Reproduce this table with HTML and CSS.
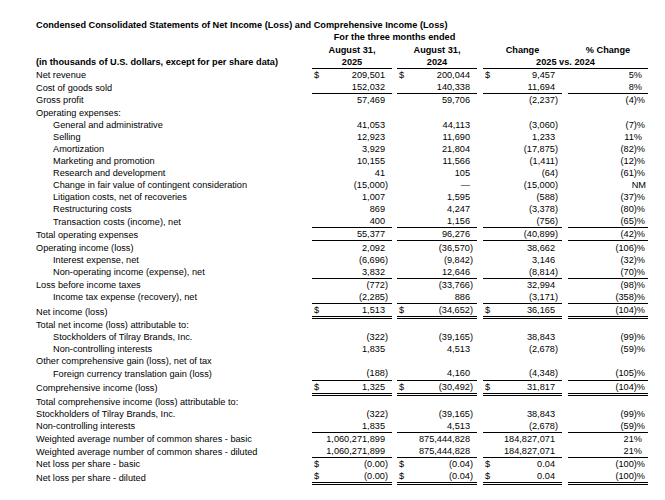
FILE: index.html
```html
<!DOCTYPE html>
<html>
<head>
<meta charset="utf-8">
<link rel="stylesheet" href="styles.css">
</head>
<body>
<div class="sheet">
<div class="title">Condensed Consolidated Statements of Net Income (Loss) and Comprehensive Income (Loss)</div>
<table class="fin">
<colgroup><col class="c-l"><col class="c-v"><col class="c-g1"><col class="c-v"><col class="c-g2"><col class="c-v3"><col class="c-g2"><col class="c-v"></colgroup>
<tr class="hd"><td></td><td colspan="3" class="ctr">For the three months ended</td><td></td><td></td><td></td><td></td></tr>
<tr class="hd"><td></td><td class="ctr">August 31,</td><td></td><td class="ctr">August 31,</td><td></td><td class="ctr">Change</td><td></td><td class="ctr">% Change</td></tr>
<tr class="hd"><td class="lbl">(in thousands of U.S. dollars, except for per share data)</td><td class="ctr b">2025</td><td></td><td class="ctr b">2024</td><td></td><td colspan="3" class="ctr b">2025 vs. 2024</td></tr>

<tr><td>Net revenue</td><td class="v"><i>$</i>209,501</td><td></td><td class="v"><i>$</i>200,044</td><td></td><td class="v"><i>$</i>9,457</td><td></td><td class="p">5%</td></tr>
<tr class="ul"><td>Cost of goods sold</td><td class="v">152,032</td><td></td><td class="v">140,338</td><td></td><td class="v">11,694</td><td></td><td class="p">8%</td></tr>
<tr><td>Gross profit</td><td class="v">57,469</td><td></td><td class="v">59,706</td><td></td><td class="v"><s>(2,237)</s></td><td></td><td class="p"><s>(4)%</s></td></tr>
<tr><td>Operating expenses:</td><td></td><td></td><td></td><td></td><td></td><td></td><td></td></tr>
<tr><td class="in">General and administrative</td><td class="v">41,053</td><td></td><td class="v">44,113</td><td></td><td class="v"><s>(3,060)</s></td><td></td><td class="p"><s>(7)%</s></td></tr>
<tr><td class="in">Selling</td><td class="v">12,923</td><td></td><td class="v">11,690</td><td></td><td class="v">1,233</td><td></td><td class="p">11%</td></tr>
<tr><td class="in">Amortization</td><td class="v">3,929</td><td></td><td class="v">21,804</td><td></td><td class="v"><s>(17,875)</s></td><td></td><td class="p"><s>(82)%</s></td></tr>
<tr><td class="in">Marketing and promotion</td><td class="v">10,155</td><td></td><td class="v">11,566</td><td></td><td class="v"><s>(1,411)</s></td><td></td><td class="p"><s>(12)%</s></td></tr>
<tr><td class="in">Research and development</td><td class="v">41</td><td></td><td class="v">105</td><td></td><td class="v"><s>(64)</s></td><td></td><td class="p"><s>(61)%</s></td></tr>
<tr><td class="in">Change in fair value of contingent consideration</td><td class="v"><s>(15,000)</s></td><td></td><td class="v">—</td><td></td><td class="v"><s>(15,000)</s></td><td></td><td class="p"><s class="nm">NM</s></td></tr>
<tr><td class="in">Litigation costs, net of recoveries</td><td class="v">1,007</td><td></td><td class="v">1,595</td><td></td><td class="v"><s>(588)</s></td><td></td><td class="p"><s>(37)%</s></td></tr>
<tr><td class="in">Restructuring costs</td><td class="v">869</td><td></td><td class="v">4,247</td><td></td><td class="v"><s>(3,378)</s></td><td></td><td class="p"><s>(80)%</s></td></tr>
<tr class="ul"><td class="in">Transaction costs (income), net</td><td class="v">400</td><td></td><td class="v">1,156</td><td></td><td class="v"><s>(756)</s></td><td></td><td class="p"><s>(65)%</s></td></tr>
<tr class="ul"><td>Total operating expenses</td><td class="v">55,377</td><td></td><td class="v">96,276</td><td></td><td class="v"><s>(40,899)</s></td><td></td><td class="p"><s>(42)%</s></td></tr>
<tr><td>Operating income (loss)</td><td class="v">2,092</td><td></td><td class="v"><s>(36,570)</s></td><td></td><td class="v">38,662</td><td></td><td class="p"><s>(106)%</s></td></tr>
<tr><td class="in">Interest expense, net</td><td class="v"><s>(6,696)</s></td><td></td><td class="v"><s>(9,842)</s></td><td></td><td class="v">3,146</td><td></td><td class="p"><s>(32)%</s></td></tr>
<tr class="ul"><td class="in">Non-operating income (expense), net</td><td class="v">3,832</td><td></td><td class="v">12,646</td><td></td><td class="v"><s>(8,814)</s></td><td></td><td class="p"><s>(70)%</s></td></tr>
<tr><td>Loss before income taxes</td><td class="v"><s>(772)</s></td><td></td><td class="v"><s>(33,766)</s></td><td></td><td class="v">32,994</td><td></td><td class="p"><s>(98)%</s></td></tr>
<tr class="ul"><td class="in">Income tax expense (recovery), net</td><td class="v"><s>(2,285)</s></td><td></td><td class="v">886</td><td></td><td class="v"><s>(3,171)</s></td><td></td><td class="p"><s>(358)%</s></td></tr>
<tr class="dl"><td>Net income (loss)</td><td class="v"><i>$</i>1,513</td><td></td><td class="v"><i>$</i><s>(34,652)</s></td><td></td><td class="v"><i>$</i>36,165</td><td></td><td class="p"><s>(104)%</s></td></tr>
<tr><td>Total net income (loss) attributable to:</td><td></td><td></td><td></td><td></td><td></td><td></td><td></td></tr>
<tr><td class="in">Stockholders of Tilray Brands, Inc.</td><td class="v"><s>(322)</s></td><td></td><td class="v"><s>(39,165)</s></td><td></td><td class="v">38,843</td><td></td><td class="p"><s>(99)%</s></td></tr>
<tr><td class="in">Non-controlling interests</td><td class="v">1,835</td><td></td><td class="v">4,513</td><td></td><td class="v"><s>(2,678)</s></td><td></td><td class="p"><s>(59)%</s></td></tr>
<tr><td>Other comprehensive gain (loss), net of tax</td><td></td><td></td><td></td><td></td><td></td><td></td><td></td></tr>
<tr class="ul"><td class="in">Foreign currency translation gain (loss)</td><td class="v"><s>(188)</s></td><td></td><td class="v">4,160</td><td></td><td class="v"><s>(4,348)</s></td><td></td><td class="p"><s>(105)%</s></td></tr>
<tr class="dl"><td>Comprehensive income (loss)</td><td class="v"><i>$</i>1,325</td><td></td><td class="v"><i>$</i><s>(30,492)</s></td><td></td><td class="v"><i>$</i>31,817</td><td></td><td class="p"><s>(104)%</s></td></tr>
<tr><td>Total comprehensive income (loss) attributable to:</td><td></td><td></td><td></td><td></td><td></td><td></td><td></td></tr>
<tr><td>Stockholders of Tilray Brands, Inc.</td><td class="v"><s>(322)</s></td><td></td><td class="v"><s>(39,165)</s></td><td></td><td class="v">38,843</td><td></td><td class="p"><s>(99)%</s></td></tr>
<tr class="ul"><td>Non-controlling interests</td><td class="v">1,835</td><td></td><td class="v">4,513</td><td></td><td class="v"><s>(2,678)</s></td><td></td><td class="p"><s>(59)%</s></td></tr>
<tr><td>Weighted average number of common shares - basic</td><td class="v">1,060,271,899</td><td></td><td class="v">875,444,828</td><td></td><td class="v">184,827,071</td><td></td><td class="p">21%</td></tr>
<tr class="ul"><td>Weighted average number of common shares - diluted</td><td class="v">1,060,271,899</td><td></td><td class="v">875,444,828</td><td></td><td class="v">184,827,071</td><td></td><td class="p">21%</td></tr>
<tr><td>Net loss per share - basic</td><td class="v"><i>$</i><s>(0.00)</s></td><td></td><td class="v"><i>$</i><s>(0.04)</s></td><td></td><td class="v"><i>$</i>0.04</td><td></td><td class="p"><s>(100)%</s></td></tr>
<tr class="dl"><td>Net loss per share - diluted</td><td class="v"><i>$</i><s>(0.00)</s></td><td></td><td class="v"><i>$</i><s>(0.04)</s></td><td></td><td class="v"><i>$</i>0.04</td><td></td><td class="p"><s>(100)%</s></td></tr>
</table>
</div>
</body>
</html>
```
FILE: styles.css
```css
html, body {
  margin: 0;
  padding: 0;
  background: #fff;
}
.sheet {
  padding: 19px 0 0 36px;
  font-family: "Liberation Sans", Arial, sans-serif;
  font-size: 9.2px;
  color: #000;
}
.title {
  font-weight: bold;
  height: 12px;
  line-height: 12px;
  white-space: nowrap;
}
.fin {
  border-collapse: separate;
  border-spacing: 0;
  table-layout: fixed;
  width: 612px;
}
.c-l { width: 276px; }
.c-v { width: 80px; }
.c-v3 { width: 79px; }
.c-g1 { width: 5px; }
.c-g2 { width: 6px; }
.fin td {
  height: 12.1px;
  line-height: 12px;
  padding: 0;
  white-space: nowrap;
  vertical-align: middle;
}
.hd td {
  font-weight: bold;
  height: 12.4px;
}
.ctr { text-align: center; }
.hd td.b { border-bottom: 1px solid #000; }
.fin td.in { padding-left: 17px; }
.v {
  text-align: right;
  padding-right: 7px !important;
  padding-left: 2px !important;
}
.p {
  text-align: right;
  padding-right: 6px !important;
}
.v i {
  float: left;
  font-style: normal;
}
s {
  text-decoration: none;
  margin-right: -3px;
}
s.nm { margin-right: -4px; }
.ul td.v, .ul td.p { border-bottom: 1px solid #000; }
.dl td.v, .dl td.p { border-bottom: 3px double #000; }
```
